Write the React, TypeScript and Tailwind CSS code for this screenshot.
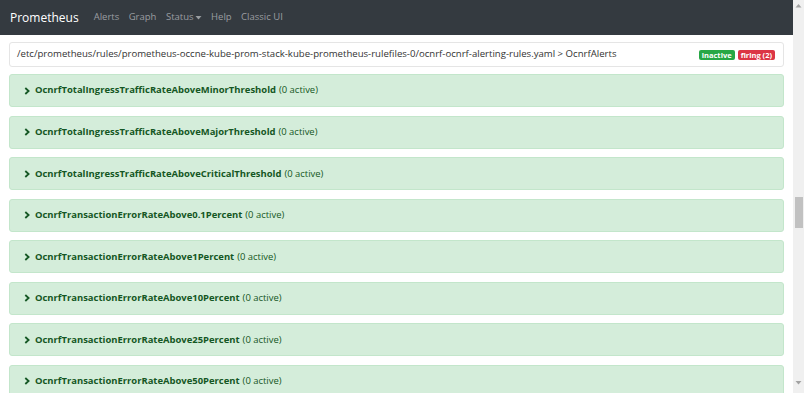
import React from "react";

const rules = [
  "OcnrfTotalIngressTrafficRateAboveMinorThreshold",
  "OcnrfTotalIngressTrafficRateAboveMajorThreshold",
  "OcnrfTotalIngressTrafficRateAboveCriticalThreshold",
  "OcnrfTransactionErrorRateAbove0.1Percent",
  "OcnrfTransactionErrorRateAbove1Percent",
  "OcnrfTransactionErrorRateAbove10Percent",
  "OcnrfTransactionErrorRateAbove25Percent",
  "OcnrfTransactionErrorRateAbove50Percent",
];

const font = { fontFamily: '"Open Sans", "Noto Sans", sans-serif' };

function Chevron() {
  return (
    <svg width="6" height="8" viewBox="0 0 6 8" className="mr-[5px] shrink-0">
      <polyline points="1.3,1 4.6,4 1.3,7" fill="none" stroke="#155724" strokeWidth="1.8" />
    </svg>
  );
}

export default function App() {
  return (
    <div className="flex h-[393px] w-[804px] overflow-hidden bg-white" style={font}>
      <div className="flex-1 flex flex-col">
        <nav className="h-[35px] bg-[#343a40] flex items-center pl-[10px] shrink-0">
          <span className="text-white text-[12px] mr-[15px]">Prometheus</span>
          <div className="flex items-center gap-[9.5px] text-[9.5px] text-[#9a9da0]">
            <span>Alerts</span>
            <span>Graph</span>
            <span className="flex items-center">
              Status
              <svg width="7" height="4" viewBox="0 0 7 4" className="ml-[1px]">
                <polygon points="0.5,0 6.5,0 3.5,3.5" fill="#9a9da0" />
              </svg>
            </span>
            <span>Help</span>
            <span>Classic UI</span>
          </div>
        </nav>
        <div className="pl-[9px] pr-[9px] pt-[7px]">
          <div className="h-[25px] border border-[#e5e5e5] rounded-[3px] flex items-center pl-[7px] pr-[8px] mb-[7px]">
            <span className="text-[9.6px] text-[#333] flex-1 whitespace-nowrap">
              /etc/prometheus/rules/prometheus-occne-kube-prom-stack-kube-prometheus-rulefiles-0/ocnrf-ocnrf-alerting-rules.yaml &gt; OcnrfAlerts
            </span>
            <span className="bg-[#28a745] text-white text-[7.5px] font-bold rounded-[2px] px-[3px] h-[10px] leading-[10px] mr-[3px]">inactive</span>
            <span className="bg-[#dc3545] text-white text-[7.5px] font-bold rounded-[2px] px-[3px] h-[10px] leading-[10px]">firing (2)</span>
          </div>
          <div className="flex flex-col gap-[8.57px]">
            {rules.map((r) => (
              <div key={r} className="h-[33px] bg-[#d4edda] border border-[#c3e6cb] rounded-[3px] flex items-center pl-[14px] shrink-0">
                <Chevron />
                <span className="text-[9.45px] font-bold text-[#155724] whitespace-nowrap">{r}</span>
                <span className="text-[9.45px] text-[#155724] ml-[3px] whitespace-nowrap">(0 active)</span>
              </div>
            ))}
          </div>
        </div>
      </div>
      <div className="w-[11px] bg-[#f0f0f0] flex flex-col items-center relative shrink-0">
        <svg width="7" height="4" viewBox="0 0 7 4" className="mt-[4px]">
          <polygon points="0.5,3.5 6.5,3.5 3.5,0" fill="#a3a3a3" />
        </svg>
        <div className="absolute left-[2px] right-[1px] top-[197px] h-[31px] bg-[#c1c1c1]" />
        <div className="flex-1" />
        <svg width="7" height="4" viewBox="0 0 7 4" className="mb-[8px]">
          <polygon points="0.5,0 6.5,0 3.5,3.5" fill="#a3a3a3" />
        </svg>
      </div>
    </div>
  );
}
